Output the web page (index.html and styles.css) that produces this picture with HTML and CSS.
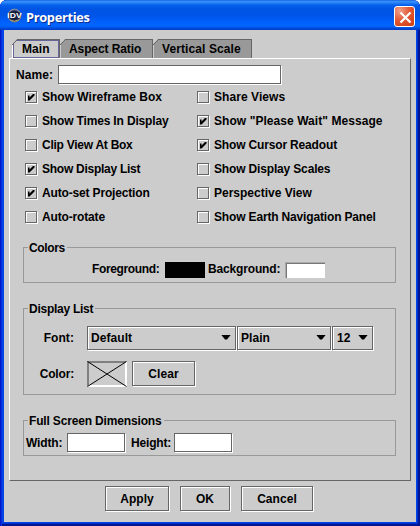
FILE: index.html
```html
<!DOCTYPE html>
<html lang="en">
<head>
<meta charset="utf-8">
<title>Properties</title>
<link rel="stylesheet" href="styles.css">
</head>
<body>
<div class="window">
  <header class="titlebar">
    <svg class="logo" width="15" height="15" viewBox="0 0 15 15">
      <circle cx="7.5" cy="7.5" r="6.400" fill="#17203f" stroke="#8d8b80"/>
      <path d="M3 3.500Q7 0 12 3.500" fill="none" stroke="#8094c0"/>
      <path d="M3 11.800Q7 14.500 12 11.800" fill="none" stroke="#b0a078"/>
      <text class="logo-text" x="0.300" y="10.300" textLength="14.400" lengthAdjust="spacingAndGlyphs">IDV</text>
    </svg>
    <h1 class="title">Properties</h1>
    <button class="close" aria-label="Close"><svg width="21" height="21" viewBox="0 0 21 21"><path d="M5.500 5.500L15.500 15.500M15.500 5.500L5.500 15.500" stroke="#fff" stroke-width="2.200" fill="none"/></svg></button>
  </header>
  <main class="content">
    <nav class="tabs">
      <div class="tab tab-main active">Main</div>
      <div class="tab tab-aspect">Aspect Ratio</div>
      <div class="tab tab-vertical">Vertical Scale</div>
    </nav>
    <section class="panel">
      <div class="name-row"><label>Name:</label><div class="field name-field"></div></div>
      <div class="checks">
        <label class="check snug"><i class="box on"></i>Show Wireframe Box</label>
        <label class="check"><i class="box"></i>Share Views</label>
        <label class="check tight"><i class="box"></i>Show Times In Display</label>
        <label class="check"><i class="box on"></i>Show "Please Wait" Message</label>
        <label class="check tighter"><i class="box"></i>Clip View At Box</label>
        <label class="check tight"><i class="box on"></i>Show Cursor Readout</label>
        <label class="check tighter"><i class="box on"></i>Show Display List</label>
        <label class="check tight"><i class="box"></i>Show Display Scales</label>
        <label class="check tight"><i class="box on"></i>Auto-set Projection</label>
        <label class="check snug"><i class="box"></i>Perspective View</label>
        <label class="check tight"><i class="box"></i>Auto-rotate</label>
        <label class="check tight"><i class="box"></i>Show Earth Navigation Panel</label>
      </div>
      <section class="group colors">
        <h2 class="legend tightest">Colors</h2>
        <div class="colors-row">
          <span class="fg-label tightest">Foreground:</span><div class="swatch black"></div>
          <span class="bg-label tight">Background:</span><div class="swatch white"></div>
        </div>
      </section>
      <section class="group display">
        <h2 class="legend tighter">Display List</h2>
        <div class="font-row">
          <span class="form-label">Font:</span>
          <div class="combo combo-font">Default<i class="arrow"></i></div>
          <div class="combo combo-style">Plain<i class="arrow"></i></div>
          <div class="combo combo-size">12<i class="arrow"></i></div>
        </div>
        <div class="color-row">
          <span class="form-label tight">Color:</span>
          <div class="no-color"><svg width="40" height="26" viewBox="0 0 40 26"><path d="M0.500 0.500L39.500 25.500M39.500 0.500L0.500 25.500" stroke="#000" fill="none"/></svg></div>
          <button class="button clear">Clear</button>
        </div>
      </section>
      <section class="group screen">
        <h2 class="legend tight">Full Screen Dimensions</h2>
        <div class="screen-row">
          <label class="width-label tight">Width:</label><div class="field size-field"></div>
          <label class="height-label tight">Height:</label><div class="field size-field"></div>
        </div>
      </section>
    </section>
    <footer class="actions">
      <button class="button apply">Apply</button>
      <button class="button ok">OK</button>
      <button class="button cancel">Cancel</button>
    </footer>
  </main>
</div>
</body>
</html>
```
FILE: styles.css
```css
* { box-sizing: border-box; }
body {
  margin: 0;
  background: #fff;
  color: #000;
  font: bold 12px/14px "Liberation Sans", Arial, sans-serif;
  letter-spacing: 0.06px;
}
.snug { letter-spacing: 0; }
.tight { letter-spacing: -0.16px; }
.tighter { letter-spacing: -0.26px; }
.tightest { letter-spacing: -0.36px; }
.window {
  width: 420px;
  height: 526px;
  padding: 0 4px 4px;
  border-radius: 7px 7px 0 0;
  overflow: hidden;
  background: #0044e6;
  box-shadow: inset 1px 0 #0019cf, inset 2px 0 #0831d9, inset -2px -2px #001590, inset -3px -3px #0030d0;
}
.titlebar {
  height: 30px;
  margin: 0 -4px;
  padding: 0 5px 0 6px;
  display: flex;
  align-items: center;
  background: linear-gradient(#0b4ed0 0, #3a93ff 1px, #2681f7 3px, #0560ec 5px, #0054e3 9px, #0055e8 16px, #005ffa 21px, #0066ff 26px, #005bf0 27px, #0044ce 29px, #003fc0 30px);
}
.logo { flex: none; margin: 1px 0 0 1px; }
.logo-text { font: bold 8px "Liberation Sans", sans-serif; fill: #fff; }
.title {
  flex: 1;
  margin: 4px 0 0 4px;
  color: #fff;
  font: bold 12.800px/16px "Open Sans", sans-serif;
  letter-spacing: -0.300px;
  text-shadow: 1px 1px #0b2d90;
}
.close {
  width: 21px;
  height: 21px;
  margin-top: 3px;
  padding: 0;
  display: grid;
  place-items: center;
  border: 1px solid #fff;
  border-radius: 3px;
  background: radial-gradient(circle at 25% 20%, #f0a08a, #e25a36 45%, #cc3c10);
}
.content { height: 492px; padding: 9px 5px 0; background: #ccc; }
.tabs { height: 19px; padding-left: 3px; display: flex; }
.tab {
  height: 19px;
  padding-top: 2px;
  position: relative;
  background: #999;
  border: 1px solid #666;
  border-bottom: 0;
  border-left-color: #ccc;
  clip-path: polygon(5px 0, 100% 0, 100% 100%, 0 100%, 0 5px);
}
.tab::before {
  content: "";
  position: absolute;
  left: -1px;
  top: -1px;
  width: 6px;
  height: 6px;
  background: linear-gradient(135deg, #ccc 44%, #666 45%, #666 55%, transparent 56%);
}
.tab-main { width: 48px; padding-left: 9px; }
.tab-aspect { width: 93px; padding-left: 8px; letter-spacing: -0.100px; }
.tab-vertical { width: 99px; padding-left: 8px; letter-spacing: 0.100px; }
.tab.active { background: #ccc; border-left-color: #fff; box-shadow: inset 1px 1px #669, inset -1px -1px #669; }
.panel {
  width: 402px;
  height: 423px;
  padding: 6px 13px 0;
  border: 1px solid #666;
  border-top-color: #fff;
  border-left-color: #fff;
}
.name-row { height: 20px; margin-left: -7px; display: flex; align-items: flex-start; }
.name-row label { width: 42px; flex: none; padding-top: 3px; }
.field {
  flex: none;
  height: 19px;
  background: #fff;
  border: 1px solid #666;
  box-shadow: 1px 1px #fff;
}
.name-field { width: 223px; }
.checks {
  margin-left: 2px;
  display: grid;
  grid-template-columns: 172px 1fr;
  grid-auto-rows: 24px;
}
.check { display: flex; align-items: center; white-space: nowrap; }
.box {
  width: 12px;
  height: 12px;
  margin-right: 5px;
  display: grid;
  place-items: center;
  border: 1px solid #666;
  box-shadow: 1px 1px #fff, inset 1px 1px #fff;
}
.box.on::after {
  content: "";
  width: 7px;
  height: 7px;
  background: #000;
  clip-path: polygon(0 2px, 2px 2px, 2px 4px, 6px 0, 7px 0, 7px 2px, 2px 7px, 0 7px);
}
.group { position: relative; width: 373px; border: 1px solid #999; }
.legend {
  position: absolute;
  left: 4px;
  top: -7px;
  margin: 0;
  padding: 0 2px 0 1px;
  background: #ccc;
  font: inherit;
  white-space: nowrap;
}
.colors { height: 36px; margin-top: 18px; }
.colors-row { display: flex; padding: 14px 0 0 68px; line-height: 15px; }
.fg-label { width: 73px; }
.bg-label { width: 77px; margin-left: 3px; }
.swatch { width: 40px; height: 16px; }
.black { background: #000; }
.white { background: #fff; border-left: 1px solid #aaa; border-top: 1px solid #aaa; box-shadow: inset 1px 1px #777; }
.display { height: 87px; margin-top: 25px; }
.font-row { display: flex; align-items: center; padding: 17px 0 0 13px; }
.form-label { width: 37px; margin-right: 13px; text-align: right; }
.combo {
  height: 24px;
  margin-right: 1px;
  padding: 0 4px 0 3px;
  display: flex;
  align-items: center;
  justify-content: space-between;
  border: 1px solid #666;
  box-shadow: 1px 1px #fff, inset 1px 1px #fff;
}
.combo-font { width: 149px; }
.combo-style { width: 94px; }
.combo-size { width: 41px; padding-left: 4px; }
.arrow { width: 10px; height: 5px; margin-top: -2px; background: #000; clip-path: polygon(0 0, 100% 0, 60% 100%, 40% 100%); }
.color-row { display: flex; align-items: center; padding: 11px 0 0 13px; }
.no-color { width: 40px; height: 26px; border: 2px solid #808080; border-right-color: #fff; border-bottom-color: #fff; }
.no-color svg { display: block; margin: -2px; }
.button {
  height: 25px;
  padding: 0;
  color: #000;
  font: inherit;
  letter-spacing: inherit;
  background: #ccc;
  border: 1px solid #666;
  border-radius: 0;
  box-shadow: 1px 1px #fff, inset 1px 1px #fff;
}
.clear { width: 63px; margin: 0 0 1px 5px; }
.screen { height: 36px; margin-top: 25px; }
.screen-row { display: flex; align-items: center; padding: 12px 0 0 2px; }
.width-label { width: 41px; }
.height-label { width: 43px; margin-left: 6px; }
.size-field { width: 58px; }
.actions { display: flex; gap: 11px; padding: 5px 0 0 96px; }
.apply { width: 64px; }
.ok { width: 50px; }
.cancel { width: 72px; }
```
